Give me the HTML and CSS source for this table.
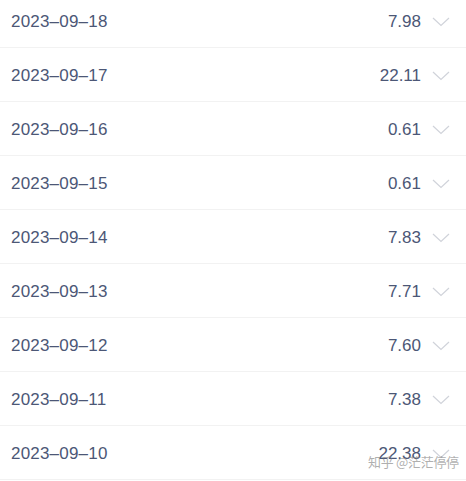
FILE: index.html
```html
<!DOCTYPE html>
<html lang="zh">
<head>
<meta charset="utf-8">
<link rel="stylesheet" href="styles.css">
</head>
<body>
<div class="list">
  <div class="row"><span class="date">2023–09–18</span><span class="right"><span class="amount">7.98</span><svg class="chev" viewBox="0 0 18 10"><path d="M1 1 L9 8.5 L17 1"/></svg></span></div>
  <div class="row"><span class="date">2023–09–17</span><span class="right"><span class="amount">22.11</span><svg class="chev" viewBox="0 0 18 10"><path d="M1 1 L9 8.5 L17 1"/></svg></span></div>
  <div class="row"><span class="date">2023–09–16</span><span class="right"><span class="amount">0.61</span><svg class="chev" viewBox="0 0 18 10"><path d="M1 1 L9 8.5 L17 1"/></svg></span></div>
  <div class="row"><span class="date">2023–09–15</span><span class="right"><span class="amount">0.61</span><svg class="chev" viewBox="0 0 18 10"><path d="M1 1 L9 8.5 L17 1"/></svg></span></div>
  <div class="row"><span class="date">2023–09–14</span><span class="right"><span class="amount">7.83</span><svg class="chev" viewBox="0 0 18 10"><path d="M1 1 L9 8.5 L17 1"/></svg></span></div>
  <div class="row"><span class="date">2023–09–13</span><span class="right"><span class="amount">7.71</span><svg class="chev" viewBox="0 0 18 10"><path d="M1 1 L9 8.5 L17 1"/></svg></span></div>
  <div class="row"><span class="date">2023–09–12</span><span class="right"><span class="amount">7.60</span><svg class="chev" viewBox="0 0 18 10"><path d="M1 1 L9 8.5 L17 1"/></svg></span></div>
  <div class="row"><span class="date">2023–09–11</span><span class="right"><span class="amount">7.38</span><svg class="chev" viewBox="0 0 18 10"><path d="M1 1 L9 8.5 L17 1"/></svg></span></div>
  <div class="row"><span class="date">2023–09–10</span><span class="right"><span class="amount">22.38</span><svg class="chev" viewBox="0 0 18 10"><path d="M1 1 L9 8.5 L17 1"/></svg></span></div>
</div>
<div class="watermark">知乎 @茫茫停停</div>
</body>
</html>
```
FILE: styles.css
```css
html, body {
  margin: 0;
  padding: 0;
  background: #ffffff;
  overflow: hidden;
}
body {
  width: 466px;
  height: 481px;
  position: relative;
  font-family: "Liberation Sans", "Noto Sans CJK SC", sans-serif;
}
.list {
  margin-top: -6px;
}
.row {
  box-sizing: border-box;
  height: 54px;
  padding: 3px 16px 0 11px;
  border-bottom: 1px solid #f2f2f2;
  display: flex;
  align-items: center;
  justify-content: space-between;
}
.date {
  font-size: 17px;
  color: #4c5776;
  letter-spacing: 0.2px;
}
.right {
  display: flex;
  align-items: center;
  gap: 11px;
}
.amount {
  font-size: 17px;
  color: #4c5776;
}
.chev {
  width: 18px;
  height: 10px;
  fill: none;
  stroke: #d0d3da;
  stroke-width: 1.2;
}
.watermark {
  position: absolute;
  left: 368px;
  top: 452px;
  white-space: nowrap;
  font-family: "Noto Sans CJK SC", sans-serif;
  font-size: 13px;
  line-height: 19px;
  color: rgba(140, 140, 140, 0.7);
  letter-spacing: -0.3px;
}
```
